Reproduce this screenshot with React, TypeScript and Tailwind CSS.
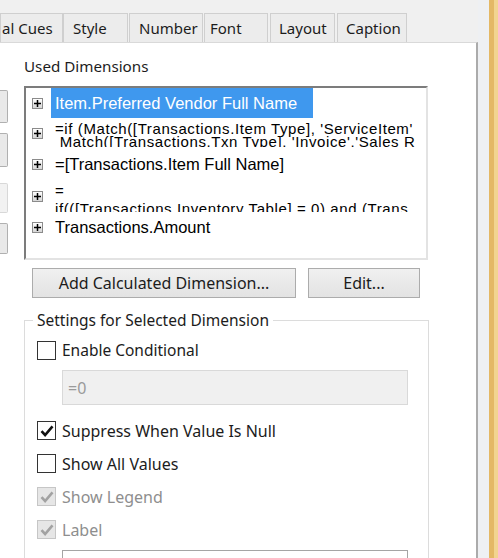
import clsx from 'clsx';

const tabs = [
  { label: 'al Cues', cls: 'w-[63px] pl-[1px]' },
  { label: 'Style', cls: 'w-[65px] pl-[9px]' },
  { label: 'Number', cls: 'ml-[1px] w-[74px] pl-[9px]' },
  { label: 'Font', cls: 'ml-[1px] w-[64px] pl-[5px]' },
  { label: 'Layout', cls: 'ml-[2px] w-[65px] pl-[8px]' },
  { label: 'Caption', cls: 'ml-[2px] w-[70px] pl-[8px]' },
];

function PlusBox() {
  return (
    <span className="flex h-[11px] w-[11px] shrink-0 items-center justify-center border border-[#8b8b8b] bg-linear-to-b from-white to-[#d6d6d6]">
      <svg width="7" height="7" viewBox="0 0 7 7">
        <path d="M0 3.5h7M3.5 0v7" stroke="#000" strokeWidth="1.5" />
      </svg>
    </span>
  );
}

function CheckBox({ checked, disabled }: { checked?: boolean; disabled?: boolean }) {
  return (
    <span
      className={clsx(
        'flex h-[19px] w-[19px] shrink-0 items-center justify-center border',
        disabled ? 'border-[#c6c6c6] bg-[#e6e6e6]' : 'border-[#333] bg-white'
      )}
    >
      {checked && (
        <svg width="14" height="12" viewBox="0 0 14 12">
          <path
            d="M1.5 6.2l3.6 3.8 7.4-8.6"
            fill="none"
            stroke={disabled ? '#a2a2a2' : '#111'}
            strokeWidth="2.6"
          />
        </svg>
      )}
    </span>
  );
}

function Option({ label, checked, disabled }: { label: string; checked?: boolean; disabled?: boolean }) {
  return (
    <div className="flex h-[33px] items-center gap-[6px]">
      <CheckBox checked={checked} disabled={disabled} />
      <span className={clsx('text-[16px] leading-[20px]', disabled ? 'text-[#8e8e8e]' : 'text-[#1c1c1c]')}>{label}</span>
    </div>
  );
}

export default function App() {
  return (
    <div className="flex h-[558px] w-[498px] overflow-hidden bg-[#f0f0f0] font-['Noto_Sans',sans-serif] text-[#1c1c1c]">
      <div className="flex w-[478px] flex-col">
        {/* tab strip */}
        <div className="flex h-[42px] shrink-0 items-end">
          {tabs.map((t) => (
            <div
              key={t.label}
              className={clsx(
                'flex h-[29px] items-center overflow-hidden whitespace-nowrap border border-b-0 border-[#cfcfcf] bg-[#ececec] text-[15px]',
                t.cls
              )}
            >
              {t.label}
            </div>
          ))}
        </div>

        {/* tab page */}
        <div className="flex flex-1 border-t border-r-2 border-t-[#d9d9d9] border-r-[#ababab] bg-white">
          {/* buttons of the neighbouring pane, cut off */}
          <div className="flex w-[24px] shrink-0 flex-col">
            <div className="mt-[47px] h-[33px] w-[8px] rounded-r-[2px] border border-l-0 border-[#b0b0b0] bg-[#e9e9e9]" />
            <div className="mt-[10px] h-[34px] w-[8px] rounded-r-[2px] border border-l-0 border-[#b0b0b0] bg-[#e9e9e9]" />
            <div className="mt-[16px] h-[30px] w-[8px] rounded-r-[2px] border border-l-0 border-[#d8d8d8] bg-[#f2f2f2]" />
            <div className="mt-[10px] h-[31px] w-[8px] rounded-r-[2px] border border-l-0 border-[#b0b0b0] bg-[#e9e9e9]" />
          </div>

          <div className="flex w-[405px] flex-col pt-[13px]">
            <div className="text-[15.2px] leading-[20px]">Used Dimensions</div>

            {/* dimension list */}
            <div className="mt-[10px] flex h-[174px] w-[404px] flex-col overflow-hidden border-2 border-t-[#7c7c7c] border-l-[#7c7c7c] border-r-[#e3e3e3] border-b-[#e3e3e3] bg-white font-['Liberation_Sans',Arial,sans-serif] whitespace-nowrap text-black">
              <div className="flex h-[30px] shrink-0 items-center pl-[6px]">
                <PlusBox />
                <span className="ml-[8px] flex h-full w-[262px] items-center bg-[#3f98ee] pl-[4px] text-[16.5px] text-white">
                  Item.Preferred Vendor Full Name
                </span>
              </div>
              <div className="flex h-[31px] shrink-0 items-center pl-[6px]">
                <PlusBox />
                <div className="ml-[12px] mt-[1px] h-[25px] overflow-hidden text-[15px] leading-[13px] tracking-[0.6px]">
                  <div>=if (Match([Transactions.Item Type], 'ServiceItem'</div>
                  <div>&nbsp;Match([Transactions.Txn Type], 'Invoice','Sales R</div>
                </div>
              </div>
              <div className="flex h-[31px] shrink-0 items-center pl-[6px]">
                <PlusBox />
                <span className="ml-[12px] text-[16.5px]">=[Transactions.Item Full Name]</span>
              </div>
              <div className="flex h-[32px] shrink-0 items-center pl-[6px]">
                <PlusBox />
                <div className="ml-[12px] mt-[2px] h-[30px] overflow-hidden text-[15px] leading-[18px] tracking-[0.6px]">
                  <div>=</div>
                  <div>if(([Transactions.Inventory Table] = 0) and (Trans</div>
                </div>
              </div>
              <div className="flex h-[30px] shrink-0 items-center pl-[6px]">
                <PlusBox />
                <span className="ml-[12px] text-[16.5px]">Transactions.Amount</span>
              </div>
            </div>

            {/* buttons */}
            <div className="mt-[8px] flex gap-[12px] pl-[8px]">
              <button className="h-[30px] w-[264px] border border-[#acacac] bg-linear-to-b from-[#f0f0f0] to-[#e3e3e3] text-[16px]">
                Add Calculated Dimension...
              </button>
              <button className="h-[30px] w-[112px] border border-[#acacac] bg-linear-to-b from-[#f0f0f0] to-[#e3e3e3] text-[16px]">
                Edit...
              </button>
            </div>

            {/* settings group */}
            <fieldset className="mt-[12px] w-[405px] border border-[#dcdcdc] pl-[12px]">
              <legend className="-ml-[4px] px-[4px] text-[15.5px] leading-[20px]">Settings for Selected Dimension</legend>
              <div className="mt-[4px] flex h-[32px] items-center gap-[6px]">
                <CheckBox />
                <span className="text-[15.5px] leading-[20px]">Enable Conditional</span>
              </div>
              <div className="ml-[25px] mt-[4px] flex h-[35px] w-[346px] items-center border border-[#d9d9d9] bg-[#f0f0f0] pl-[5px] text-[16px] text-[#9a9a9a]">
                =0
              </div>
              <div className="mt-[9px]">
                <Option label="Suppress When Value Is Null" checked />
                <Option label="Show All Values" />
                <Option label="Show Legend" checked disabled />
                <Option label="Label" checked disabled />
              </div>
              <div className="ml-[25px] mt-[4px] h-[35px] w-[346px] border border-[#a5a5a5] bg-white" />
            </fieldset>
          </div>
        </div>
      </div>

      {/* window frame on the right */}
      <div className="w-[11px] shrink-0 bg-[#eef0f3]" />
      <div className="w-[5px] shrink-0 bg-[#e4b865]" />
      <div className="w-[4px] shrink-0 bg-[#f2d48f]" />
    </div>
  );
}
